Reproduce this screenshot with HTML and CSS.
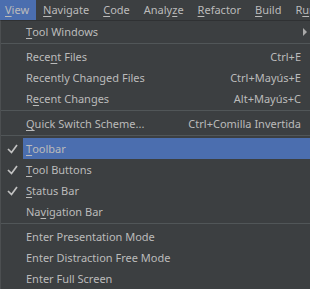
FILE: index.html
```html
<!DOCTYPE html>
<html lang="en">
<head>
  <meta charset="UTF-8">
  <title>View menu</title>
  <link rel="stylesheet" href="styles.css">
</head>
<body>
  <nav class="menubar">
    <span class="top active"><u>V</u>iew</span>
    <span class="top"><u>N</u>avigate</span>
    <span class="top"><u>C</u>ode</span>
    <span class="top">Analy<u>z</u>e</span>
    <span class="top"><u>R</u>efactor</span>
    <span class="top"><u>B</u>uild</span>
    <span class="top">R<u>u</u>n</span>
  </nav>

  <div class="dropdown">
    <div class="item"><span class="check"></span><span class="label"><u>T</u>ool Windows</span><span class="arrow"></span></div>
    <div class="sep"></div>
    <div class="item"><span class="check"></span><span class="label">Rece<u>n</u>t Files</span><span class="key">Ctrl+E</span></div>
    <div class="item"><span class="check"></span><span class="label">Recently Changed Files</span><span class="key">Ctrl+Mayús+E</span></div>
    <div class="item"><span class="check"></span><span class="label">R<u>e</u>cent Changes</span><span class="key">Alt+Mayús+C</span></div>
    <div class="sep"></div>
    <div class="item"><span class="check"></span><span class="label"><u>Q</u>uick Switch Scheme...</span><span class="key">Ctrl+Comilla Invertida</span></div>
    <div class="sep"></div>
    <div class="item selected">
      <span class="check"><svg width="11" height="10" viewBox="0 0 11 10"><path d="M1 5 L4.5 8.5 L10 1" fill="none" stroke="#c2c2c2" stroke-width="1.7"/></svg></span>
      <span class="label"><u>T</u>oolbar</span>
    </div>
    <div class="item">
      <span class="check"><svg width="11" height="10" viewBox="0 0 11 10"><path d="M1 5 L4.5 8.5 L10 1" fill="none" stroke="#c2c2c2" stroke-width="1.7"/></svg></span>
      <span class="label"><u>T</u>ool Buttons</span>
    </div>
    <div class="item">
      <span class="check"><svg width="11" height="10" viewBox="0 0 11 10"><path d="M1 5 L4.5 8.5 L10 1" fill="none" stroke="#c2c2c2" stroke-width="1.7"/></svg></span>
      <span class="label"><u>S</u>tatus Bar</span>
    </div>
    <div class="item"><span class="check"></span><span class="label">Na<u>v</u>igation Bar</span></div>
    <div class="sep"></div>
    <div class="item"><span class="check"></span><span class="label">Enter Presentation Mode</span></div>
    <div class="item"><span class="check"></span><span class="label">Enter Distraction Free Mode</span></div>
    <div class="item"><span class="check"></span><span class="label">Enter Full Screen</span></div>
  </div>
</body>
</html>
```

FILE: styles.css
```css
* {
  box-sizing: border-box;
}
body {
  margin: 0;
  width: 310px;
  height: 289px;
  overflow: hidden;
  background: #3c3f41;
  color: #bbbbbb;
  font-family: 'Noto Sans', sans-serif;
  font-size: 11px;
}
u {
  text-decoration: underline;
  text-decoration-thickness: 1px;
  text-underline-offset: 2px;
}
/* Menu bar */
.menubar {
  display: flex;
  height: 20px;
  margin-left: -2px;
  white-space: nowrap;
}
.top {
  padding: 0 7px;
  line-height: 20px;
}
.top.active {
  background: #4b6eaf;
}
/* Dropdown */
.dropdown {
  width: 320px;
  border-top: 1px solid #2f3133;
  border-left: 1px solid #4c4f51;
  background: #3c3f41;
}
.item {
  display: flex;
  align-items: center;
  height: 21px;
  white-space: nowrap;
}
.check {
  width: 22px;
  flex: none;
  display: flex;
  justify-content: center;
  align-items: center;
  padding-left: 1px;
}
.label {
  flex: 1;
  align-self: stretch;
  display: flex;
  align-items: center;
  padding-left: 3px;
}
.item.selected .label {
  background: #4b6eaf;
}
.key {
  padding-right: 19px;
}
.arrow {
  width: 0;
  height: 0;
  margin-right: 13px;
  border-top: 4px solid transparent;
  border-bottom: 4px solid transparent;
  border-left: 4px solid #a9a9a9;
}
.sep {
  height: 3px;
  margin-top: 1px;
  border-top: 1px solid #515658;
}
```
